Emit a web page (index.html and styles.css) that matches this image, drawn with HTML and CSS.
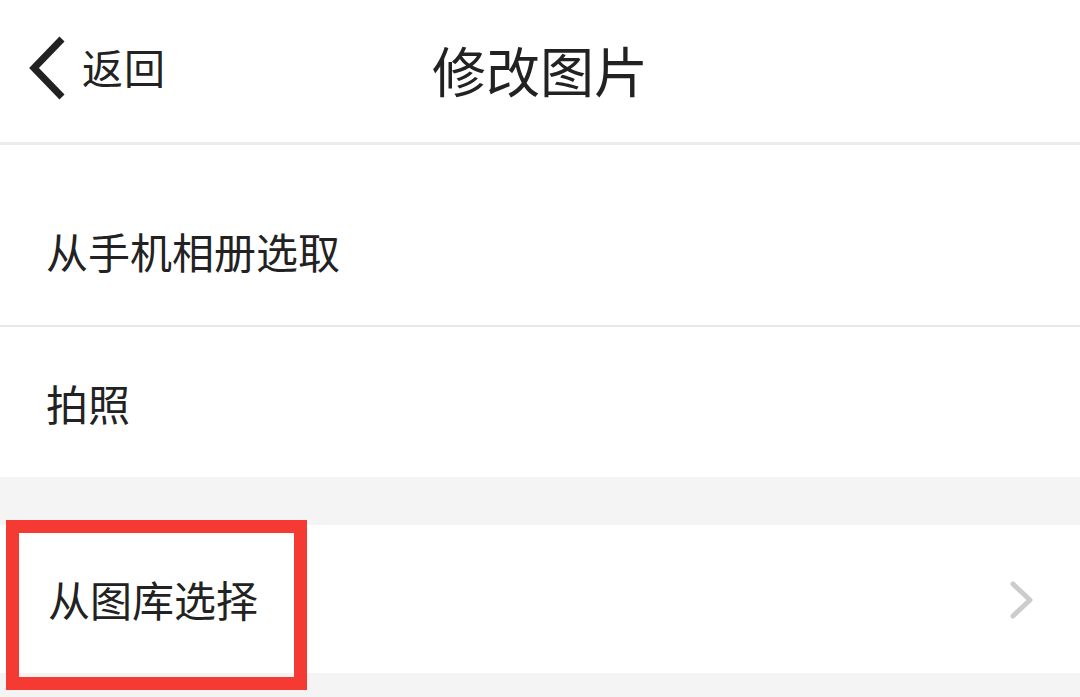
FILE: index.html
```html
<!DOCTYPE html>
<html lang="zh">
<head>
<meta charset="utf-8">
<link rel="stylesheet" href="styles.css">
</head>
<body>
<div class="page">
  <header class="nav">
    <div class="back">
      <svg class="back-icon" width="40" height="64" viewBox="0 0 40 64"><polyline points="34,3 6,32 34,61" fill="none" stroke="#222" stroke-width="7"/></svg>
      <span class="back-text">返回</span>
    </div>
    <h1 class="title">修改图片</h1>
  </header>
  <div class="group">
    <div class="row row-first"><span class="label">从手机相册选取</span></div>
    <div class="row row-last"><span class="label">拍照</span></div>
  </div>
  <div class="gap"></div>
  <div class="group">
    <div class="row row-nav">
      <span class="label">从图库选择</span>
      <svg class="chev" width="28" height="40" viewBox="0 0 28 40"><polyline points="5,4 22,20 5,36" fill="none" stroke="#cccccc" stroke-width="5" stroke-linecap="round" stroke-linejoin="round"/></svg>
      <div class="highlight"></div>
    </div>
  </div>
</div>
</body>
</html>
```

FILE: styles.css
```css
html, body {
  margin: 0;
  padding: 0;
  background: #f4f4f4;
}
body {
  font-family: "Noto Sans CJK SC", "Noto Sans", sans-serif;
  color: #222;
}
.page {
  width: 1080px;
  height: 697px;
  overflow: hidden;
  background: #f4f4f4;
}
.nav {
  position: relative;
  height: 142px;
  background: #fff;
  border-bottom: 3px solid #ececec;
  display: flex;
  align-items: center;
  justify-content: center;
}
.back {
  position: absolute;
  left: 28px;
  top: 36px;
  display: flex;
  align-items: center;
  gap: 14px;
}
.back-icon {
  display: block;
}
.back-text {
  font-size: 41px;
  line-height: 1;
  letter-spacing: 1px;
  margin-top: -4px;
}
.title {
  margin: 0;
  font-size: 54px;
  font-weight: 400;
  line-height: 1;
  margin-left: 0;
  margin-top: -2px;
}
.group {
  background: #fff;
}
.row {
  position: relative;
  display: flex;
  align-items: center;
  padding-left: 46px;
  padding-right: 44px;
}
.label {
  font-size: 42px;
  line-height: 1;
  flex: 1;
}
.row-first {
  height: 148px;
  padding-top: 32px;
  border-bottom: 2px solid #e8e8e8;
}
.row-last {
  height: 150px;
  padding-top: 2px;
  box-sizing: border-box;
}
.row-nav {
  height: 148px;
  padding-top: 0;
  box-sizing: border-box;
  padding-left: 48px;
}
.gap {
  height: 48px;
  background: #f4f4f4;
}
.chev {
  display: block;
  margin-top: 2px;
}
.highlight {
  position: absolute;
  left: 6px;
  top: -5px;
  width: 275px;
  height: 144px;
  border: 13px solid #f43a33;
}
```
